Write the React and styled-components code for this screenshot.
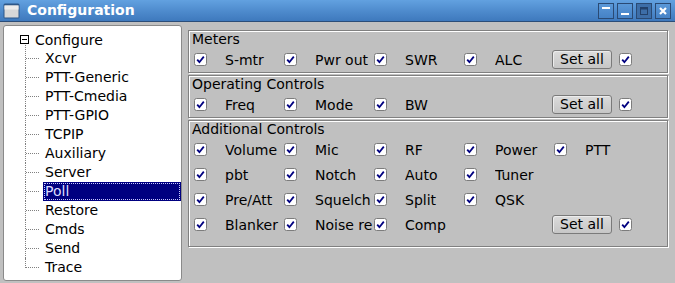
import React from 'react';
import styled, { createGlobalStyle } from 'styled-components';

const Global = createGlobalStyle`
  html, body {
    margin: 0;
    padding: 0;
    background: #c0c0c0;
  }
  body {
    font-family: "DejaVu Sans", "Liberation Sans", sans-serif;
    font-size: 14px;
    color: #000;
  }
`;

const Window = styled.div`
  width: 675px;
  height: 283px;
  background: #c0c0c0;
  display: flex;
  flex-direction: column;
  overflow: hidden;
`;

const TitleBar = styled.div`
  height: 21px;
  flex: none;
  display: flex;
  align-items: center;
  padding: 0 4px 0 3px;
  background: linear-gradient(#62a1e0, #4f8cce 50%, #3e79bd);
  border-bottom: 1px solid #2b4d78;
`;

const Title = styled.div`
  margin-left: 7px;
  flex: 1;
  color: #fff;
  font-weight: bold;
  font-size: 14px;
  line-height: 21px;
`;

const TitleButtons = styled.div`
  display: flex;
  gap: 3px;
`;

const TitleButton = styled.div`
  width: 14px;
  height: 14px;
  border: 1px solid #2a4a74;
  background: ${(p) => (p.$dim ? '#3d6ea8' : 'linear-gradient(#5a98d8, #4582c6)')};
  display: flex;
  align-items: center;
  justify-content: center;
`;

const Body = styled.div`
  flex: 1;
  display: flex;
  padding: 3px 0 0 3px;
  gap: 6px;
`;

const TreeBox = styled.div`
  width: 177px;
  height: 250px;
  background: #fff;
  border: 1px solid #8a8a8a;
  border-radius: 3px;
  padding-top: 4px;
  display: flex;
  flex-direction: column;
`;

const TreeRoot = styled.div`
  height: 19px;
  display: flex;
  align-items: center;
  padding-left: 16px;
`;

const Toggle = styled.div`
  position: relative;
  width: 7px;
  height: 7px;
  border: 1px solid #000;
  display: flex;
  align-items: center;
  justify-content: center;
  margin-right: 6px;
  &::before {
    content: '';
    width: 5px;
    height: 1px;
    background: #000;
  }
  &::after {
    content: '';
    position: absolute;
    left: 4px;
    top: 9px;
    height: 5px;
    border-left: 1px dotted #808080;
  }
`;

const TreeItem = styled.div`
  height: 19px;
  display: flex;
  align-items: center;
  padding-left: 21px;
`;

const Connector = styled.span`
  position: relative;
  width: 18px;
  height: 19px;
  flex: none;
  &::before {
    content: '';
    position: absolute;
    left: 0;
    top: 0;
    height: ${(p) => (p.$last ? '10px' : '19px')};
    border-left: 1px dotted #808080;
  }
  &::after {
    content: '';
    position: absolute;
    left: 1px;
    top: 9px;
    width: 13px;
    border-top: 1px dotted #808080;
  }
`;

const ItemLabel = styled.span`
  flex: 1;
  height: 19px;
  line-height: 18px;
  padding-left: 2px;
  box-sizing: border-box;
  background: ${(p) => (p.$selected ? '#000080' : 'transparent')};
  color: ${(p) => (p.$selected ? '#dcdcff' : '#000')};
  outline: ${(p) => (p.$selected ? '1px dotted #c8c8ff' : 'none')};
  outline-offset: -2px;
`;

const Panel = styled.div`
  width: 480px;
  padding-top: 5px;
  display: flex;
  flex-direction: column;
  gap: 2px;
`;

const Group = styled.div`
  border: 1px solid #808080;
  box-shadow: inset 1px 1px 0 #fff, 1px 1px 0 #fff;
  padding-bottom: ${(p) => p.$pad || 0}px;
`;

const GroupLabel = styled.div`
  height: 16px;
  line-height: 16px;
  padding-left: 3px;
`;

const Row = styled.div`
  height: 25px;
  display: flex;
  align-items: center;
  padding-left: 5px;
`;

const Cell = styled.div`
  width: 90px;
  flex: none;
  display: flex;
  align-items: center;
`;

const Label = styled.span`
  margin-left: 18px;
  width: 59px;
  overflow: hidden;
  white-space: nowrap;
`;

const SetAllWrap = styled.div`
  display: flex;
  align-items: center;
  margin-left: -2px;
  gap: 7px;
`;

const Button = styled.div`
  width: 58px;
  height: 17px;
  border: 1px solid #7a7a7a;
  border-radius: 3px;
  background: linear-gradient(#dcdcdc, #c6c6c6);
  box-shadow: inset 1px 1px 0 #ececec;
  display: flex;
  align-items: center;
  justify-content: center;
  line-height: 17px;
`;

const Check = () => (
  <svg width="13" height="13" viewBox="0 0 13 13" style={{ flex: 'none' }}>
    <rect x="0.5" y="0.5" width="12" height="12" rx="2" fill="#fff" stroke="#7c7c7c" />
    <path d="M3.2 6.6 L5.4 9.2 L9.8 3.6" fill="none" stroke="#000080" strokeWidth="1.8" />
  </svg>
);

const Item = ({ label }) => (
  <Cell>
    <Check />
    <Label>{label}</Label>
  </Cell>
);

const SetAll = () => (
  <SetAllWrap>
    <Button>Set all</Button>
    <Check />
  </SetAllWrap>
);

const treeItems = [
  'Xcvr',
  'PTT-Generic',
  'PTT-Cmedia',
  'PTT-GPIO',
  'TCPIP',
  'Auxiliary',
  'Server',
  'Poll',
  'Restore',
  'Cmds',
  'Send',
  'Trace',
];

const WinIcon = () => (
  <svg width="17" height="16" viewBox="0 0 17 16">
    <rect x="0.5" y="0.5" width="16" height="15" rx="1.5" fill="#2d5788" />
    <rect x="1.5" y="2.5" width="14" height="12" fill="#d8d8d8" />
    <rect x="1.5" y="2.5" width="14" height="4" fill="#ececec" />
  </svg>
);

export default function App() {
  return (
    <Window>
      <Global />
      <TitleBar>
        <WinIcon />
        <Title>Configuration</Title>
        <TitleButtons>
          <TitleButton>
            <svg width="8" height="10" viewBox="0 0 8 10">
              <rect x="0" y="1" width="8" height="2" fill="#fff" />
            </svg>
          </TitleButton>
          <TitleButton>
            <svg width="8" height="10" viewBox="0 0 8 10">
              <rect x="0" y="7" width="8" height="2" fill="#fff" />
            </svg>
          </TitleButton>
          <TitleButton $dim>
            <svg width="8" height="8" viewBox="0 0 8 8">
              <rect x="0.5" y="0.5" width="7" height="7" fill="none" stroke="#23416a" />
              <rect x="0.5" y="0.5" width="7" height="2" fill="#23416a" />
            </svg>
          </TitleButton>
          <TitleButton>
            <svg width="8" height="8" viewBox="0 0 8 8">
              <path d="M1 1 L7 7 M7 1 L1 7" stroke="#fff" strokeWidth="2.2" />
            </svg>
          </TitleButton>
        </TitleButtons>
      </TitleBar>
      <Body>
        <TreeBox>
          <TreeRoot>
            <Toggle />
            Configure
          </TreeRoot>
          {treeItems.map((t, i) => (
            <TreeItem key={t}>
              <Connector $last={i === treeItems.length - 1} />
              <ItemLabel $selected={t === 'Poll'}>{t}</ItemLabel>
            </TreeItem>
          ))}
        </TreeBox>
        <Panel>
          <Group>
            <GroupLabel>Meters</GroupLabel>
            <Row>
              <Item label="S-mtr" />
              <Item label="Pwr out" />
              <Item label="SWR" />
              <Item label="ALC" />
              <SetAll />
            </Row>
          </Group>
          <Group>
            <GroupLabel>Operating Controls</GroupLabel>
            <Row>
              <Item label="Freq" />
              <Item label="Mode" />
              <Item label="BW" />
              <Cell />
              <SetAll />
            </Row>
          </Group>
          <Group $pad={9}>
            <GroupLabel>Additional Controls</GroupLabel>
            <Row>
              <Item label="Volume" />
              <Item label="Mic" />
              <Item label="RF" />
              <Item label="Power" />
              <Item label="PTT" />
            </Row>
            <Row>
              <Item label="pbt" />
              <Item label="Notch" />
              <Item label="Auto" />
              <Item label="Tuner" />
            </Row>
            <Row>
              <Item label="Pre/Att" />
              <Item label="Squelch" />
              <Item label="Split" />
              <Item label="QSK" />
            </Row>
            <Row>
              <Item label="Blanker" />
              <Item label="Noise re" />
              <Item label="Comp" />
              <Cell />
              <SetAll />
            </Row>
          </Group>
        </Panel>
      </Body>
    </Window>
  );
}
